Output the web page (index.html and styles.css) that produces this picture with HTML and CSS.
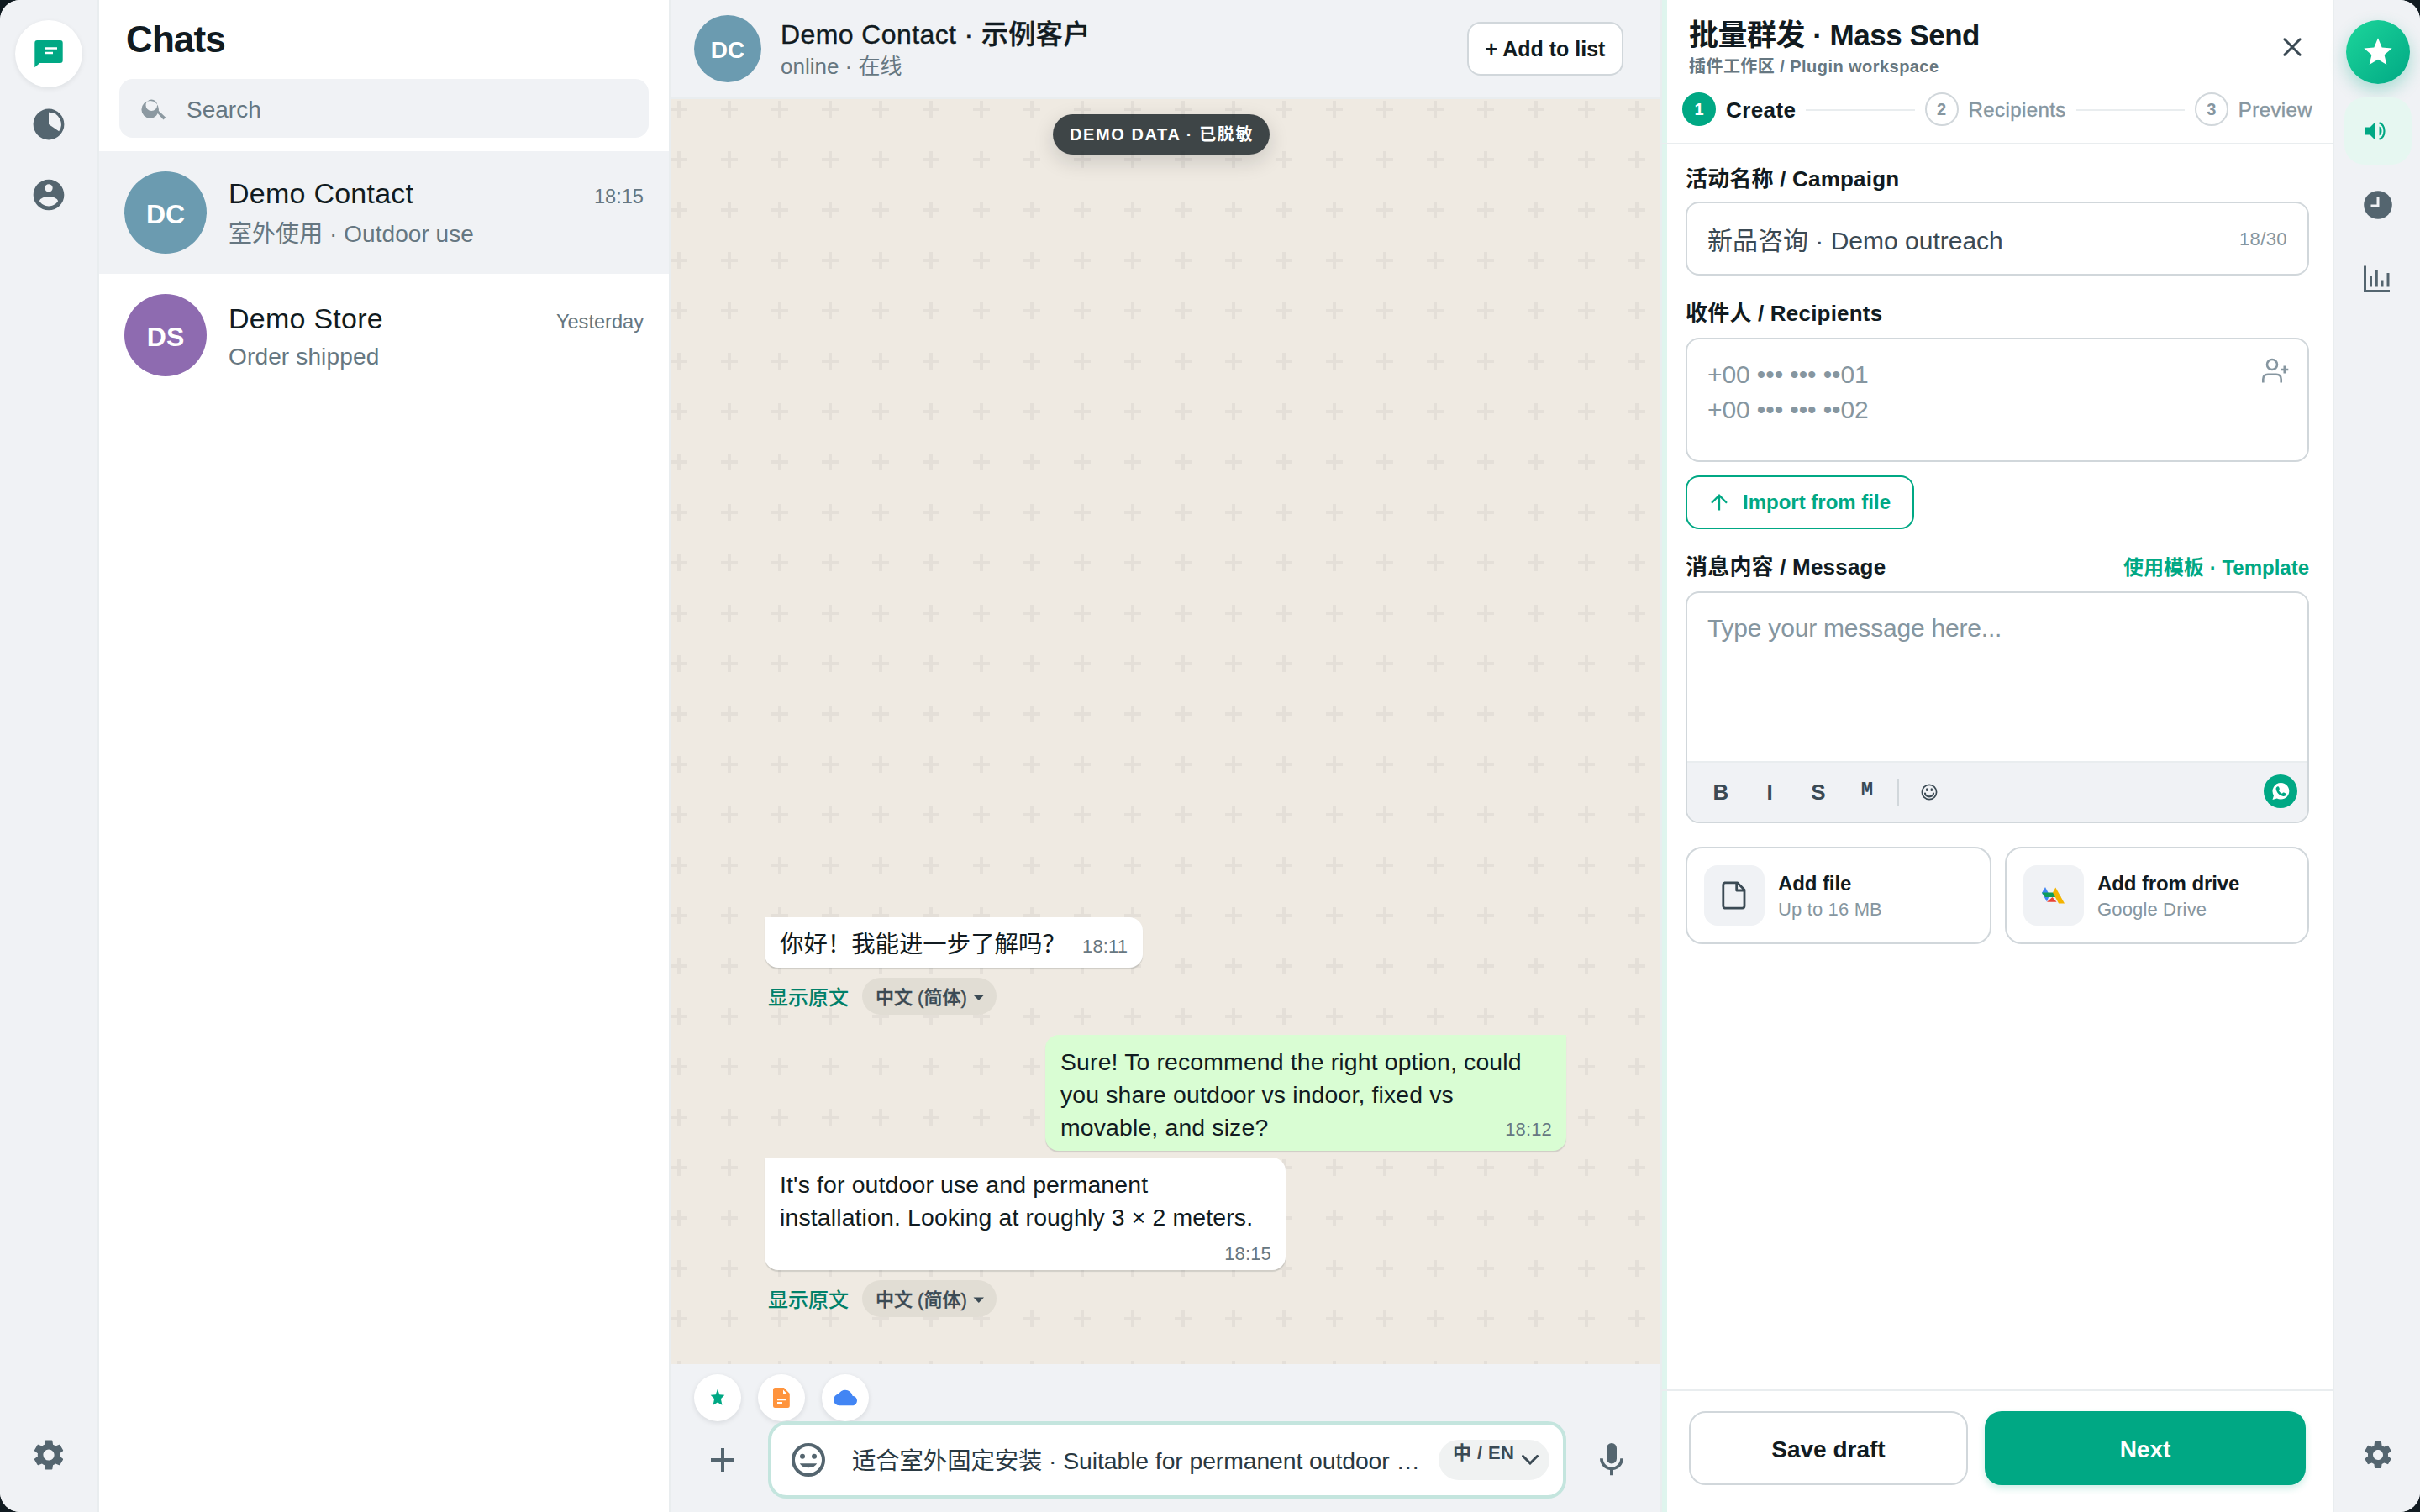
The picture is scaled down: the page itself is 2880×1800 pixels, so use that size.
FILE: index.html
```html
<!DOCTYPE html>
<html lang="zh-CN">
<head>
<meta charset="utf-8">
<title>Chats</title>
<link rel="stylesheet" href="styles.css">
</head>
<body>
<div class="app">
  <nav class="rail rail-left">
    <a class="rail-chat">
      <svg width="40" height="40" viewBox="0 0 40 40"><path fill="#00a884" d="M6.300 4h27.400a3 3 0 0 1 3 3v21a3 3 0 0 1-3 3H9.300l-6 5.200V7a3 3 0 0 1 3-3z"/><path fill="#fff" d="M15 12.300h15v2.500H15zM15 17.700h10v2.500H15z"/></svg>
    </a>
    <svg class="rail-icon" width="44" height="44" viewBox="0 0 44 44"><circle cx="22" cy="22" r="18.400" fill="#54656f"/><path fill="#f0f2f5" d="M22 22V7.800a14.300 14.300 0 0 1 12.200 22.500z"/></svg>
    <svg class="rail-icon" width="44" height="44" viewBox="0 0 24 24"><path fill="#54656f" d="M12 2C6.480 2 2 6.480 2 12s4.480 10 10 10 10-4.480 10-10S17.520 2 12 2zm0 3a2.550 2.550 0 1 1 0 5.100A2.550 2.550 0 0 1 12 5zm0 14.300c-2.500 0-4.710-1.280-6-3.220.03-1.990 4-2.980 6-2.980 1.990 0 5.970.99 6 2.980-1.290 1.940-3.500 3.220-6 3.220z"/></svg>
    <svg class="rail-gear" width="44" height="44" viewBox="0 0 24 24"><path fill="#54656f" d="M19.140 12.940c.04-.3.06-.61.06-.94 0-.32-.02-.64-.07-.94l2.030-1.580a.49.49 0 0 0 .12-.61l-1.920-3.320a.488.488 0 0 0-.59-.22l-2.390.96c-.5-.38-1.030-.7-1.620-.94l-.36-2.540a.484.484 0 0 0-.48-.41h-3.840c-.24 0-.43.17-.47.41l-.36 2.540c-.59.24-1.130.57-1.620.94l-2.390-.96c-.22-.08-.47 0-.59.22L2.740 8.870c-.12.21-.08.47.12.61l2.030 1.580c-.05.3-.09.63-.09.94s.02.64.07.94l-2.030 1.580a.49.49 0 0 0-.12.61l1.920 3.320c.12.22.37.29.59.22l2.390-.96c.5.38 1.030.7 1.620.94l.36 2.540c.05.24.24.41.48.41h3.840c.24 0 .44-.17.47-.41l.36-2.540c.59-.24 1.130-.56 1.620-.94l2.390.96c.22.08.47 0 .59-.22l1.920-3.320c.12-.22.07-.47-.12-.61l-2.010-1.580zM12 15.600A3.610 3.610 0 0 1 8.400 12c0-1.980 1.620-3.600 3.600-3.600s3.600 1.620 3.600 3.600-1.620 3.600-3.600 3.600z"/></svg>
  </nav>

  <aside class="chats">
    <h1 class="chats-title">Chats</h1>
    <div class="search">
      <svg width="32" height="26" viewBox="0 0 32 26"><g fill="#667781" opacity=".72"><path fill-rule="evenodd" d="M.4 13.400a10.300 10.300 0 1 0 20.600 0 10.300 10.300 0 1 0-20.600 0zM5.500 8.200a6.800 6.800 0 1 1 13.600 0 6.800 6.800 0 1 1-13.600 0z"/><path d="M19.300 13.500l9.900 9.200-2.700 2.700-8.600-9.300z"/></g></svg>
      <span>Search</span>
    </div>
    <div class="row row-active">
      <div class="avatar avatar-lg teal">DC</div>
      <div class="row-body">
        <div class="row-top"><span class="row-name">Demo Contact</span><span class="row-time">18:15</span></div>
        <div class="row-sub">室外使用 · Outdoor use</div>
      </div>
    </div>
    <div class="row row-tight">
      <div class="avatar avatar-lg purple">DS</div>
      <div class="row-body">
        <div class="row-top"><span class="row-name">Demo Store</span><span class="row-time">Yesterday</span></div>
        <div class="row-sub">Order shipped</div>
      </div>
    </div>
  </aside>

  <main class="chat">
    <header class="chat-head">
      <div class="avatar avatar-md teal">DC</div>
      <div class="chat-id">
        <div class="chat-name">Demo Contact · 示例客户</div>
        <div class="chat-status">online · 在线</div>
      </div>
      <button class="add-list">+ Add to list</button>
    </header>
    <div class="badge">DEMO DATA · 已脱敏</div>
    <section class="messages">
      <div class="bubble in single"><span>你好！我能进一步了解吗？</span><time>18:11</time></div>
      <div class="translate"><a>显示原文</a><span class="lang">中文 (简体)<svg width="14" height="8" viewBox="0 0 14 8"><path fill="#3b4a54" d="M.5.5h12.500l-6.200 6.500z"/></svg></span></div>
      <div class="bubble out"><p>Sure! To recommend the right option, could<br>you share outdoor vs indoor, fixed vs<br>movable, and size?</p><time>18:12</time></div>
      <div class="bubble in long"><p>It's for outdoor use and permanent<br>installation. Looking at roughly 3 × 2 meters.</p><time>18:15</time></div>
      <div class="translate"><a>显示原文</a><span class="lang">中文 (简体)<svg width="14" height="8" viewBox="0 0 14 8"><path fill="#3b4a54" d="M.5.5h12.500l-6.200 6.500z"/></svg></span></div>
    </section>
    <footer class="composer">
      <div class="tools">
        <a class="tool"><svg width="24" height="24" viewBox="0 0 24 24"><path fill="#00a884" d="M12 1.600l2.300 6.600 6 .6-4.400 4.500 1.500 7.500L12 17.500l-5.400 3.300 1.500-7.500-4.400-4.500 6-.6z"/></svg></a>
        <a class="tool"><svg width="24" height="28" viewBox="0 0 24 28"><path fill="#ff943d" d="M4.500 2H15l6.800 7v14.500a2.500 2.500 0 0 1-2.500 2.500H4.500A2.500 2.500 0 0 1 2 23.500v-19A2.500 2.500 0 0 1 4.500 2z"/><path fill="#fff" d="M14 4.500l4.600 4.700H14zM7 15h10v2.200H7zM7 19h6v2.200H7z"/></svg></a>
        <a class="tool"><svg width="28" height="28" viewBox="0 0 24 24"><path fill="#4285f4" d="M19.350 10.040A7.490 7.490 0 0 0 12 4C9.110 4 6.600 5.640 5.350 8.040A5.994 5.994 0 0 0 0 14c0 3.310 2.690 6 6 6h13c2.760 0 5-2.240 5-5 0-2.640-2.050-4.780-4.650-4.960z"/></svg></a>
      </div>
      <div class="compose-row">
        <svg class="plus" width="28" height="28" viewBox="0 0 28 28"><path d="M14 0v28M0 14h28" stroke="#54656f" stroke-width="4"/></svg>
        <div class="compose-box">
          <svg class="smile" width="40" height="40" viewBox="0 0 40 40"><circle cx="20" cy="20" r="18" fill="none" stroke="#54656f" stroke-width="4"/><circle cx="13" cy="15.800" r="3" fill="#54656f"/><circle cx="27" cy="15.800" r="3" fill="#54656f"/><path fill="#54656f" d="M9.800 24.300h20.400a10.800 7.200 0 0 1-20.400 0z"/></svg>
          <span class="compose-text">适合室外固定安装 · Suitable for permanent outdoor …</span>
          <span class="switch"><b>中 / EN</b><svg width="20" height="12" viewBox="0 0 20 12"><path d="M1.500 1.500l8.500 8.500 8.500-8.500" fill="none" stroke="#3b4a54" stroke-width="3" stroke-linecap="round"/></svg></span>
        </div>
        <svg class="mic" width="48" height="48" viewBox="0 0 24 24"><path fill="#54656f" d="M12 14.200a3 3 0 0 0 3-3V5a3 3 0 0 0-6 0v6.200a3 3 0 0 0 3 3z"/><path fill="#54656f" d="M17.100 11.100c0 3-2.540 5.300-5.100 5.300s-5.100-2.300-5.100-5.300H5c0 3.610 2.720 6.430 6 6.920v3.080h2v-3.080c3.280-.48 6-3.300 6-6.920z"/></svg>
      </div>
    </footer>
  </main>

  <section class="panel">
    <header class="panel-head">
      <div class="panel-title-row">
        <div>
          <h2>批量群发 · Mass Send</h2>
          <div class="panel-sub">插件工作区 / Plugin workspace</div>
        </div>
        <svg class="close" width="24" height="24" viewBox="0 0 24 24"><path d="M2.800 2.800l18.400 18.400M21.200 2.800L2.800 21.200" stroke="#3b4a54" stroke-width="3" stroke-linecap="round"/></svg>
      </div>
      <div class="steps">
        <span class="dot on">1</span><b class="step-on">Create</b><i></i>
        <span class="dot">2</span><span class="step">Recipients</span><i></i>
        <span class="dot">3</span><span class="step">Preview</span>
      </div>
    </header>
    <div class="form">
      <div class="label first"><b>活动名称 / Campaign</b></div>
      <div class="field one"><span>新品咨询 · Demo outreach</span><small>18/30</small></div>
      <div class="label"><b>收件人 / Recipients</b></div>
      <div class="field numbers">
        <p>+00 ••• ••• ••01<br>+00 ••• ••• ••02</p>
        <svg width="34" height="32" viewBox="0 0 34 32"><g fill="none" stroke="#8696a0" stroke-width="2.600"><circle cx="14" cy="9" r="6"/><path d="M3.300 30.500v-4c0-3.500 2.200-5.700 5.700-5.700h10c3.500 0 5.700 2.200 5.700 5.700v4"/><path d="M28.800 10.500v9M24.300 15h9"/></g></svg>
      </div>
      <button class="import"><svg width="20" height="20" viewBox="0 0 20 20"><path d="M10 19.500V2M1 10.700L10 1.700l9 9" fill="none" stroke="#00a884" stroke-width="2.300"/></svg>Import from file</button>
      <div class="label"><b>消息内容 / Message</b><a>使用模板 · Template</a></div>
      <div class="editor">
        <div class="editor-text">Type your message here...</div>
        <div class="toolbar">
          <b>B</b><b>I</b><b>S</b><b class="mono">M</b><i></i>
          <span><svg width="20" height="20" viewBox="0 0 20 20"><circle cx="10" cy="10" r="8.600" fill="none" stroke="#3b4a54" stroke-width="1.700"/><ellipse cx="7.200" cy="7.200" rx="1.300" ry="1.900" fill="#3b4a54"/><ellipse cx="12.800" cy="7.200" rx="1.300" ry="1.900" fill="#3b4a54"/><path d="M5 11.500a5 3.800 0 0 0 10 0" fill="none" stroke="#3b4a54" stroke-width="2.200" stroke-linecap="round"/></svg></span>
          <svg class="wa" width="40" height="40" viewBox="0 0 40 40"><circle cx="20" cy="20" r="20" fill="#00a884"/><path fill="#fff" d="M20.500 10a9.800 9.800 0 1 1-4.700 18.400L10.500 30l1.500-5A9.900 9.900 0 0 1 20.500 10z"/><path fill="#00a884" d="M16.600 14.200c.6-.2 1.200 0 1.400.6l.8 2c.2.500 0 .9-.3 1.200l-.7.8c.9 1.900 2.200 3.100 4.100 4l.9-1c.4-.4.800-.5 1.300-.3l2 1c.5.300.6.700.5 1.200-.3 1.600-1.800 2.400-3.300 2.200-4.500-.7-8.100-4.200-8.700-8.600-.2-1.300.8-2.700 2-3.100z"/></svg>
        </div>
      </div>
      <div class="cards">
        <div class="card">
          <span class="tile"><svg width="40" height="40" viewBox="0 0 40 40"><path d="M8 4.800h15.500L32 13.300V32.500a2.700 2.700 0 0 1-2.700 2.700H9.500a2.700 2.700 0 0 1-2.700-2.700V7.500A2.700 2.700 0 0 1 9.500 4.800M22.700 5v9H32" fill="none" stroke="#3b4a54" stroke-width="2.800" stroke-linejoin="round"/></svg></span>
          <div><b>Add file</b><small>Up to 16 MB</small></div>
        </div>
        <div class="card">
          <span class="tile"><svg width="28" height="20" viewBox="0 0 28 20"><path fill="#4285f4" d="M4 0l5 9.500-3 8L0 7z"/><path fill="#0f9d58" d="M0 6.500h17.500l5 5.500H4z"/><path fill="#ea4335" d="M6 17.800L12.500 12l5 5.800z"/><path fill="#f4b400" d="M13 6.500L16.300.5 27 19.500h-7z"/></svg></span>
          <div><b>Add from drive</b><small>Google Drive</small></div>
        </div>
      </div>
    </div>
    <footer class="panel-foot">
      <button class="draft">Save draft</button>
      <button class="next">Next</button>
    </footer>
  </section>

  <nav class="rail rail-right">
    <a class="star"><svg width="40" height="40" viewBox="0 0 24 24"><path fill="#fff" d="M12 17.270L18.180 21l-1.640-7.030L22 9.240l-7.190-.61L12 2 9.190 8.630 2 9.240l5.460 4.730L5.820 21z"/></svg></a>
    <a class="slot slot-on"><svg width="34" height="30" viewBox="0 0 34 30"><path fill="#00a884" d="M2 10.500h5.500L14 4v22l-6.500-6.500H2z"/><path d="M18.500 9.500c4 2 4 9 0 11" fill="#00a884"/><path d="M18.500 5.200c8 3 8 16.600 0 19.600" fill="none" stroke="#00a884" stroke-width="2.200"/></svg></a>
    <a class="slot"><svg width="34" height="34" viewBox="0 0 34 34"><circle cx="17" cy="17" r="16.800" fill="#54656f"/><path d="M17 7.500V18H8.500" fill="none" stroke="#f0f2f5" stroke-width="3"/></svg></a>
    <a class="slot"><svg width="34" height="34" viewBox="0 0 34 34"><path d="M1.500 1.500v30h29.500" fill="none" stroke="#54656f" stroke-width="3"/><path d="M8.500 13.500v13M15.300 7v19.500M22 18.500v8M29 10v16.500" stroke="#54656f" stroke-width="3"/></svg></a>
    <svg class="rail-gear" width="40" height="40" viewBox="0 0 24 24"><path fill="#54656f" d="M19.140 12.940c.04-.3.06-.61.06-.94 0-.32-.02-.64-.07-.94l2.030-1.580a.49.49 0 0 0 .12-.61l-1.920-3.320a.488.488 0 0 0-.59-.22l-2.390.96c-.5-.38-1.030-.7-1.620-.94l-.36-2.540a.484.484 0 0 0-.48-.41h-3.840c-.24 0-.43.17-.47.41l-.36 2.540c-.59.24-1.130.57-1.620.94l-2.390-.96c-.22-.08-.47 0-.59.22L2.740 8.870c-.12.21-.08.47.12.61l2.030 1.580c-.05.3-.09.63-.09.94s.02.64.07.94l-2.030 1.580a.49.49 0 0 0-.12.61l1.920 3.320c.12.22.37.29.59.22l2.390-.96c.5.38 1.030.7 1.620.94l.36 2.540c.05.24.24.41.48.41h3.840c.24 0 .44-.17.47-.41l.36-2.540c.59-.24 1.130-.56 1.620-.94l2.390.96c.22.08.47 0 .59-.22l1.920-3.320c.12-.22.07-.47-.12-.61l-2.010-1.580zM12 15.600A3.610 3.610 0 0 1 8.400 12c0-1.980 1.620-3.600 3.600-3.600s3.600 1.620 3.600 3.600-1.620 3.600-3.600 3.600z"/></svg>
  </nav>
</div>
</body>
</html>
```
FILE: styles.css
```css
* { box-sizing: border-box; }
body {
  margin: 0;
  background: #111b21;
  color: #111b21;
  font-family: "Liberation Sans", "Noto Sans CJK SC", sans-serif;
}
h1, h2, p { margin: 0; }
svg { display: block; flex: none; }
button { font: inherit; color: inherit; margin: 0; padding: 0; cursor: pointer; }
i { font-style: normal; }

.app {
  display: flex;
  width: 2880px;
  height: 1800px;
  overflow: hidden;
  border-radius: 24px;
  background: #fff;
}

/* side rails */
.rail { display: flex; flex-direction: column; align-items: center; flex: none; background: #f0f2f5; }
.rail-left { width: 118px; padding: 24px 0 46px; border-right: 2px solid #e9edef; }
.rail-chat {
  display: flex; align-items: center; justify-content: center;
  width: 80px; height: 80px; margin-bottom: 22px;
  border-radius: 50%; background: #fff;
  box-shadow: 0 2px 6px rgba(11, 20, 26, .08);
}
.rail-icon { margin-bottom: 40px; }
.rail-gear { margin-top: auto; }
.rail-right { width: 102px; padding: 24px 0 48px 2px; }
.star {
  display: flex; align-items: center; justify-content: center;
  width: 76px; height: 76px; margin-bottom: 16px;
  border-radius: 50%;
  background: linear-gradient(135deg, #1dd69b, #00a884);
  box-shadow: 0 8px 20px rgba(0, 168, 132, .3);
}
.slot {
  display: flex; align-items: center; justify-content: center;
  width: 80px; height: 80px; margin-bottom: 8px;
  border-radius: 24px;
}
.slot-on { background: #e6f7f1; }

/* chat list */
.chats { width: 680px; flex: none; border-right: 2px solid #e9edef; }
.chats-title { padding-left: 32px; font-size: 44px; line-height: 94px; letter-spacing: -.9px; }
.search {
  display: flex; align-items: center; gap: 22px;
  height: 70px; margin: 0 24px 16px; padding: 1px 0 0 26px;
  border-radius: 16px; background: #f0f2f5;
  color: #667781; font-size: 28px;
}
.search span { padding-top: 3px; }
.row { display: flex; align-items: center; gap: 26px; height: 146px; padding: 0 30px; }
.row-active { background: #f0f2f5; }
.row-body { flex: 1; padding-top: 2px; }
.row-top { display: flex; justify-content: space-between; align-items: baseline; line-height: 46px; }
.row-name { font-size: 34px; letter-spacing: .25px; }
.row-time { font-size: 23.600px; color: #667781; }
.row-sub { font-size: 28px; line-height: 44px; letter-spacing: .05px; color: #667781; }
.row-tight .row-body { padding-top: 5px; }
.row-tight .row-top { line-height: 43px; }
.row-tight .row-sub { line-height: 40px; letter-spacing: .15px; }
.avatar {
  display: flex; align-items: center; justify-content: center; flex: none;
  padding-top: 4px; border-radius: 50%;
  color: #fff; font-weight: 700;
}
.avatar-lg { width: 98px; height: 98px; font-size: 32px; }
.avatar-md { width: 80px; height: 80px; font-size: 28px; }
.teal { background: #6b9bb0; }
.purple { background: #8e6bb0; }

/* conversation */
.chat { position: relative; display: flex; flex-direction: column; width: 1178px; flex: none; }
.chat-head {
  display: flex; align-items: center; height: 118px; flex: none;
  padding: 0 44px 0 28px; border-bottom: 2px solid #e9edef; background: #f0f2f5;
}
.chat-id { flex: 1; padding: 4px 0 0 23px; line-height: 38px; }
.chat-name { font-size: 32px; font-weight: 500; letter-spacing: .4px; -webkit-text-stroke: .4px; }
.chat-status { font-size: 26px; color: #667781; }
.add-list {
  width: 186px; height: 64px;
  border: 2px solid #d1d7db; border-radius: 16px; background: #fff;
  font-size: 25px; font-weight: 700;
}
.badge {
  position: absolute; left: 455px; top: 136px;
  width: 258px; height: 48px; padding-left: 1px;
  border-radius: 24px; background: rgba(17, 27, 33, .8); color: #fff;
  box-shadow: 0 8px 24px rgba(11, 20, 26, .16);
  font-size: 20px; font-weight: 700; line-height: 49px; letter-spacing: 1.600px;
  text-align: center; white-space: nowrap;
}
.messages {
  display: flex; flex-direction: column; align-items: flex-start; justify-content: flex-end;
  flex: 1; padding: 0 112px 56px;
  background-color: #efeae2;
  background-image: url("data:image/svg+xml,%3Csvg xmlns='http://www.w3.org/2000/svg' width='60' height='60'%3E%3Cpath d='M8 0h4v20H8zM0 8h20v4H0z' fill='%23e4dfd8'/%3E%3C/svg%3E");
  background-position: 0 2px;
}
.bubble {
  display: grid; padding: 13px 17px 7px 18px;
  border-radius: 16px; box-shadow: 0 2px 1px rgba(11, 20, 26, .13);
  font-size: 28.400px; line-height: 39.200px; letter-spacing: .15px; white-space: nowrap;
}
.bubble time { font-size: 22px; line-height: 30px; color: #667781; }
.in { background: #fff; border-top-left-radius: 0; }
.out { align-self: flex-end; width: 620px; height: 138px; margin-bottom: 8px; background: #d9fdd3; border-top-right-radius: 0; }
.out p, .out time { grid-area: 1 / 1; }
.out time { place-self: end; margin-bottom: 3px; }
.single { display: flex; align-items: baseline; justify-content: space-between; width: 450px; height: 60px; padding: 13px 18px 0; letter-spacing: 0; }
.single time { letter-spacing: .1px; }
.long { width: 620px; height: 134px; }
.long time { justify-self: end; margin-top: 9px; }
.translate { display: flex; align-items: center; gap: 16px; height: 44px; margin: 12px 0 24px; padding-left: 4px; }
.translate:last-child { margin-bottom: 0; }
.translate a { width: 96px; padding-bottom: 2px; font-size: 24px; font-weight: 500; color: #008069; }
.lang {
  display: flex; align-items: center; gap: 7px;
  width: 160px; height: 44px; padding: 0 0 2px 16px;
  border-radius: 22px; background: #e1ddd4; color: #3b4a54;
  font-size: 22px; font-weight: 500; -webkit-text-stroke: .4px; white-space: nowrap;
}
.lang svg { margin-top: 5px; }

/* composer */
.composer { height: 176px; flex: none; padding: 12px 0 0 28px; background: #f0f2f5; }
.tools { display: flex; gap: 20px; }
.tool {
  display: flex; align-items: center; justify-content: center;
  width: 56px; height: 56px; border-radius: 50%; background: #fff;
  box-shadow: 0 2px 6px rgba(11, 20, 26, .1);
}
.compose-row { display: flex; align-items: center; height: 92px; }
.plus { margin: 0 40px 0 20px; }
.compose-box {
  display: flex; align-items: center;
  width: 950px; height: 92px; padding: 0 16px 0 24px;
  border: 4px solid #c4e5de; border-radius: 22px; background: #fff;
}
.compose-text { flex: 1; padding: 0 0 3px 32px; font-size: 28.400px; letter-spacing: -.1px; color: #2a3942; white-space: nowrap; }
.switch {
  display: flex; align-items: center; gap: 9px;
  width: 132px; height: 48px; padding-left: 17px;
  border-radius: 24px; background: #f0f2f2; color: #3b4a54;
  font-size: 22px; letter-spacing: .4px; white-space: nowrap;
}
.switch b { align-self: flex-start; line-height: 32px; }
.mic { margin-left: 30px; }

/* plugin panel */
.panel {
  display: flex; flex-direction: column; width: 802px; flex: none;
  border-left: 2px solid #e9edef; border-right: 2px solid #e9edef;
  box-shadow: inset 6px 0 0 #dff5ee;
}
.panel-head { height: 172px; flex: none; padding-top: 20px; border-bottom: 2px solid #e9edef; }
.panel-title-row { display: flex; align-items: center; justify-content: space-between; height: 74px; padding: 0 36px 0 32px; }
.close { margin-top: -2px; }
.panel h2 { font-size: 35px; line-height: 44px; letter-spacing: -.5px; }
.panel-sub { font-size: 20px; font-weight: 700; line-height: 30px; letter-spacing: .45px; color: #667781; }
.steps { display: flex; align-items: center; gap: 12px; height: 72px; padding: 0 24px; font-size: 24px; color: #8696a0; }
.steps i { flex: 1; height: 2px; background: #e9edef; margin-top: 2px; }
.steps b, .steps .step { padding-top: 2px; }
.dot {
  display: flex; align-items: center; justify-content: center;
  width: 40px; height: 40px; border: 2px solid #d1d7db; border-radius: 50%;
  font-size: 20px; font-weight: 700;
}
.dot.on { border-color: #00a884; background: #00a884; color: #fff; }
.step-on { font-size: 26px; letter-spacing: .4px; color: #111b21; }
.step { letter-spacing: .4px; -webkit-text-stroke: .4px; }
.form { flex: 1; padding: 25px 28px 0; }
.label { display: flex; justify-content: space-between; align-items: baseline; height: 32px; margin: 29px 0 13px; font-size: 26px; line-height: 32px; letter-spacing: .2px; }
.label.first { margin: 0 0 11px; }
.label a { font-size: 24px; font-weight: 700; letter-spacing: 0; color: #00a884; }
.field { display: flex; justify-content: space-between; border: 2px solid #d1d7db; border-radius: 16px; padding: 0 24px; font-size: 30px; }
.one { align-items: center; height: 88px; color: #3b4a54; }
.one small { padding-top: 2px; font-size: 22px; letter-spacing: .4px; color: #8696a0; }
.numbers { height: 148px; padding: 21px 22px 0 24px; line-height: 42px; letter-spacing: -.1px; color: #8696a0; }
.import {
  display: flex; align-items: center; gap: 18px;
  width: 272px; height: 64px; margin-top: 16px; padding-left: 28px;
  border: 2px solid #00a884; border-radius: 16px; background: #fff;
  font-size: 24px; font-weight: 700; color: #00a884;
}
.editor { display: flex; flex-direction: column; height: 276px; border: 2px solid #d1d7db; border-radius: 16px; overflow: hidden; }
.editor-text { flex: 1; padding: 21px 24px; font-size: 30px; line-height: 42px; letter-spacing: -.2px; color: #8696a0; }
.toolbar {
  display: flex; align-items: center; gap: 14px; height: 72px; padding: 0 12px 0 18px;
  border-top: 2px solid #e9edef; background: #f0f2f5; color: #3b4a54; font-size: 26px;
}
.toolbar b, .toolbar span { display: flex; justify-content: center; width: 44px; }
.toolbar i { width: 2px; height: 32px; background: #d1d7db; }
.toolbar .mono { font-family: "Liberation Mono", monospace; font-size: 24px; padding-bottom: 6px; }
.wa { margin: 0 0 2px auto; }
.cards { display: grid; grid-template-columns: 364px 1fr; gap: 16px; margin-top: 28px; }
.card { display: flex; align-items: center; gap: 16px; height: 116px; padding: 0 20px; border: 2px solid #d1d7db; border-radius: 20px; }
.card b, .card small { display: block; line-height: 31px; }
.card div { padding-top: 2px; }
.card b { font-size: 24px; letter-spacing: -.1px; }
.card small { font-size: 22px; letter-spacing: .15px; color: #8696a0; }
.tile { display: flex; align-items: center; justify-content: center; width: 72px; height: 72px; border-radius: 16px; background: #f0f2f5; }
.panel-foot { display: flex; gap: 20px; height: 146px; flex: none; padding: 24px 32px 0; border-top: 2px solid #e9edef; }
.panel-foot button { height: 88px; padding-top: 4px; border-radius: 20px; font-size: 28px; font-weight: 700; }
.draft { width: 332px; border: 2px solid #d1d7db; background: #fff; }
.next { width: 382px; border: 0; background: #00a884; color: #fff; box-shadow: 0 4px 8px rgba(0, 168, 132, .2); }
```
